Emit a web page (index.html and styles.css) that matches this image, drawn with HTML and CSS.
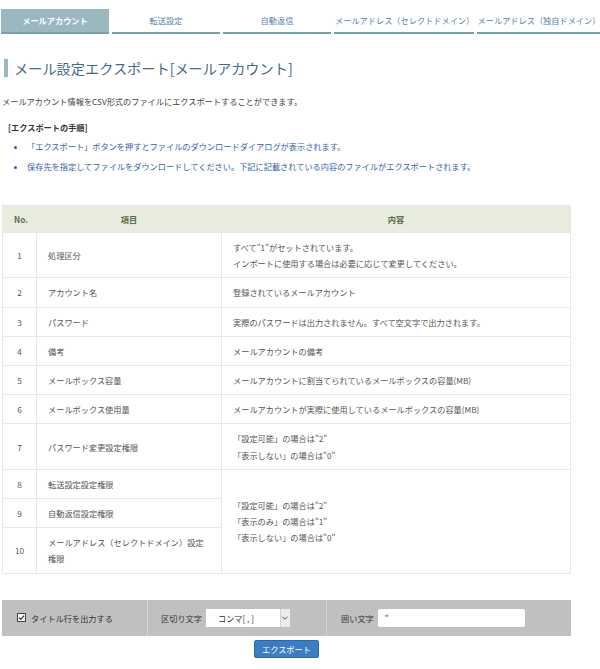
FILE: index.html
```html
<!DOCTYPE html>
<html lang="ja">
<head>
    <meta charset="UTF-8">
    <meta name="viewport" content="width=device-width, initial-scale=1.0">
    <title>メール設定エクスポート</title>
    <link rel="stylesheet" href="styles.css">
</head>
<body>
    <nav class="tabs">
        <div class="tab active">メールアカウント</div>
        <div class="tab">転送設定</div>
        <div class="tab">自動返信</div>
        <div class="tab">メールアドレス（セレクトドメイン）</div>
        <div class="tab">メールアドレス（独自ドメイン）</div>
    </nav>

    <h1 class="page-title">メール設定エクスポート[メールアカウント]</h1>

    <p class="intro">メールアカウント情報をCSV形式のファイルにエクスポートすることができます。</p>

    <div class="steps">
        <h2>[エクスポートの手順]</h2>
        <ul>
            <li>「エクスポート」ボタンを押すとファイルのダウンロードダイアログが表示されます。</li>
            <li>保存先を指定してファイルをダウンロードしてください。下記に記載されている内容のファイルがエクスポートされます。</li>
        </ul>
    </div>

    <div class="content">
        <table class="fields">
            <thead>
                <tr>
                    <th class="col-no">No.</th>
                    <th class="col-item">項目</th>
                    <th>内容</th>
                </tr>
            </thead>
            <tbody>
                <tr>
                    <td class="num">1</td>
                    <td>処理区分</td>
                    <td>すべて"1"がセットされています。<br>インポートに使用する場合は必要に応じて変更してください。</td>
                </tr>
                <tr>
                    <td class="num">2</td>
                    <td>アカウント名</td>
                    <td>登録されているメールアカウント</td>
                </tr>
                <tr>
                    <td class="num">3</td>
                    <td>パスワード</td>
                    <td>実際のパスワードは出力されません。すべて空文字で出力されます。</td>
                </tr>
                <tr>
                    <td class="num">4</td>
                    <td>備考</td>
                    <td>メールアカウントの備考</td>
                </tr>
                <tr>
                    <td class="num">5</td>
                    <td>メールボックス容量</td>
                    <td>メールアカウントに割当てられているメールボックスの容量(MB)</td>
                </tr>
                <tr>
                    <td class="num">6</td>
                    <td>メールボックス使用量</td>
                    <td>メールアカウントが実際に使用しているメールボックスの容量(MB)</td>
                </tr>
                <tr>
                    <td class="num">7</td>
                    <td>パスワード変更設定権限</td>
                    <td>「設定可能」の場合は"2"<br>「表示しない」の場合は"0"</td>
                </tr>
                <tr>
                    <td class="num">8</td>
                    <td>転送設定設定権限</td>
                    <td rowspan="3">「設定可能」の場合は"2"<br>「表示のみ」の場合は"1"<br>「表示しない」の場合は"0"</td>
                </tr>
                <tr>
                    <td class="num">9</td>
                    <td>自動返信設定権限</td>
                </tr>
                <tr>
                    <td class="num">10</td>
                    <td>メールアドレス（セレクトドメイン）設定権限</td>
                </tr>
            </tbody>
        </table>

        <div class="options">
            <div class="option opt-title">
                <span class="checkbox">
                    <svg width="9" height="9" viewBox="0 0 9 9">
                        <rect x="0.5" y="0.5" width="8" height="8" fill="#fff" stroke="#444"/>
                        <path d="M2 4.6 L3.8 6.3 L7 2.6" fill="none" stroke="#333" stroke-width="1.2"/>
                    </svg>
                </span>
                <span>タイトル行を出力する</span>
            </div>
            <div class="option opt-sep">
                <span>区切り文字</span>
                <div class="select">
                    <span class="select-value">コンマ[ , ]</span>
                    <span class="select-arrow">
                        <svg width="6" height="4" viewBox="0 0 6 4">
                            <path d="M0.5 0.8 L3 3.2 L5.5 0.8" fill="none" stroke="#555" stroke-width="1"/>
                        </svg>
                    </span>
                </div>
            </div>
            <div class="option opt-quote">
                <span>囲い文字</span>
                <div class="text-input">"</div>
            </div>
        </div>

        <div class="actions">
            <button class="export-button">エクスポート</button>
        </div>
    </div>
</body>
</html>
```

FILE: styles.css
```css
body {
    margin: 0;
    font-family: "Noto Sans CJK JP", "Noto Sans", sans-serif;
    font-size: 8.2px;
    color: #444;
    background-color: #fff;
}

.tabs {
    display: flex;
    gap: 3px;
    margin-top: 9px;
    padding-left: 1px;
}

.tab {
    min-width: 106px;
    padding: 0 1px;
    height: 23px;
    line-height: 23px;
    text-align: center;
    color: #5a82ad;
    border-bottom: 2px solid #7aa0aa;
    white-space: nowrap;
}

.tab.active {
    background-color: #9bb7c0;
    color: #fff;
    font-weight: bold;
}

.page-title {
    margin: 25px 0 0 4px;
    padding-left: 6px;
    border-left: 4px solid #9bb7c0;
    font-size: 14.2px;
    font-weight: normal;
    line-height: 18px;
    color: #46698a;
}

.intro {
    margin: 18px 0 0 2px;
    line-height: 12px;
    color: #444;
}

.steps {
    margin: 14px 0 0 8px;
}

.steps h2 {
    margin: 0;
    font-size: 8.2px;
    line-height: 12px;
    color: #333;
}

.steps ul {
    margin: 7px 0 0;
    padding-left: 19px;
    color: #3562a8;
}

.steps li {
    line-height: 12px;
    margin-bottom: 8px;
}

.content {
    width: 569px;
    margin: 33px 0 0 2px;
}

.fields {
    width: 100%;
    border-collapse: collapse;
    table-layout: fixed;
}

.fields th,
.fields td {
    border: 1px solid #e8e8e8;
    line-height: 16.2px;
    padding: 6px 11px;
    text-align: left;
    vertical-align: middle;
    color: #555;
}

.fields th {
    height: 14px;
    line-height: 14px;
    padding: 6px 11px;
    background-color: #e8eddf;
    color: #5b6b4b;
    text-align: center;
    font-weight: bold;
}

.fields .col-no {
    width: 11px;
}

.fields .col-item {
    width: 162px;
}

.fields td.num {
    text-align: center;
    padding-left: 4px;
    padding-right: 4px;
}

.options {
    display: flex;
    height: 36px;
    margin-top: 26px;
    background-color: #c0c0c0;
    color: #333;
}

.option {
    display: flex;
    align-items: center;
    gap: 4px;
    border-right: 1px solid #d6d6d6;
}

.opt-title {
    width: 130px;
    padding-left: 15px;
    gap: 5px;
}

.opt-sep {
    width: 165px;
    padding-left: 13px;
}

.opt-quote {
    flex: 1;
    padding-left: 14px;
    border-right: none;
}

.checkbox {
    display: flex;
}

.select {
    display: flex;
    width: 84px;
    height: 18px;
    background-color: #fff;
}

.select-value {
    flex: 1;
    padding-left: 12px;
    line-height: 18px;
}

.select-arrow {
    width: 9px;
    display: flex;
    align-items: center;
    justify-content: center;
    background-color: #ececec;
    border-left: 1px solid #d0d0d0;
}

.text-input {
    width: 140px;
    height: 18px;
    line-height: 18px;
    padding-left: 7px;
    background-color: #fff;
    border-radius: 2px;
}

.actions {
    display: flex;
    justify-content: center;
    margin-top: 4px;
}

.export-button {
    width: 65px;
    height: 18px;
    padding: 0;
    font-family: inherit;
    font-size: 8.2px;
    color: #fff;
    background-color: #3b7cc2;
    border: 1px solid #2c68a6;
    border-radius: 2px;
}
```
